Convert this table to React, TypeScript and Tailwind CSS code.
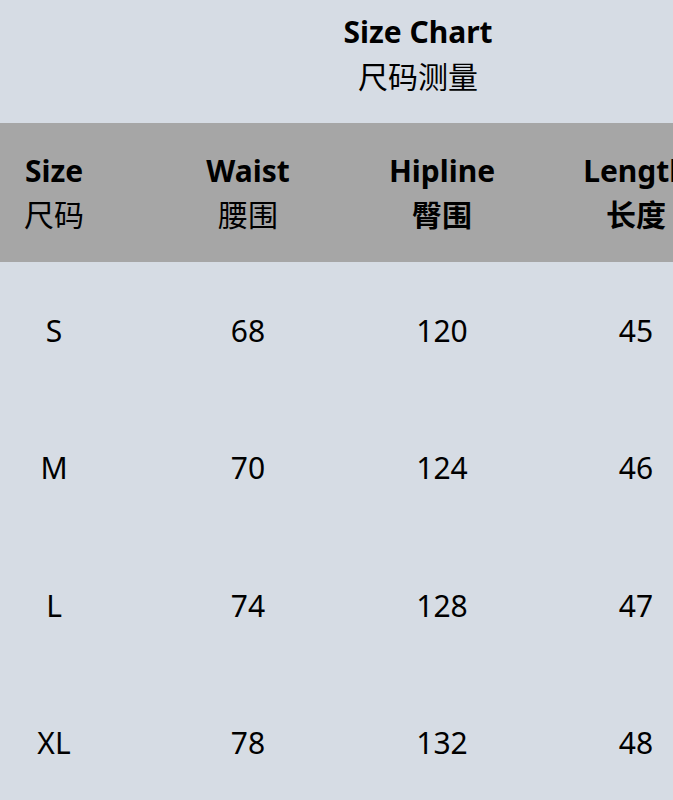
const headers = [
  { en: "Size", zh: "尺码", zhBold: false },
  { en: "Waist", zh: "腰围", zhBold: false },
  { en: "Hipline", zh: "臀围", zhBold: true },
  { en: "Length", zh: "长度", zhBold: true },
];

const rows = [
  ["S", "68", "120", "45"],
  ["M", "70", "124", "46"],
  ["L", "74", "128", "47"],
  ["XL", "78", "132", "48"],
];

export default function App() {
  return (
    <div
      className="w-[673px] h-[800px] overflow-hidden bg-[#d6dce4] text-black"
      style={{ fontFamily: '"Noto Sans", "Noto Sans CJK SC", sans-serif' }}
    >
      {/* title */}
      <div className="h-[123px] w-[836px] pt-[9px] text-center text-[30px] leading-[45px]">
        <div className="font-bold">Size Chart</div>
        <div>尺码测量</div>
      </div>

      {/* header band */}
      <div className="h-[139px] bg-[#a6a6a6] flex items-center">
        <div className="ml-[-43px] grid grid-cols-[repeat(4,194px)] shrink-0">
          {headers.map((h) => (
            <div key={h.en} className="text-center text-[30px] leading-[44px]">
              <div className="font-bold">{h.en}</div>
              <div className={h.zhBold ? "font-bold" : ""}>{h.zh}</div>
            </div>
          ))}
        </div>
      </div>

      {/* data rows */}
      {rows.map((r) => (
        <div key={r[0]} className="h-[137.5px] flex items-center">
          <div className="ml-[-43px] grid grid-cols-[repeat(4,194px)] shrink-0">
            {r.map((v, i) => (
              <div key={i} className="text-center text-[30px] leading-[40px]">
                {v}
              </div>
            ))}
          </div>
        </div>
      ))}
    </div>
  );
}
